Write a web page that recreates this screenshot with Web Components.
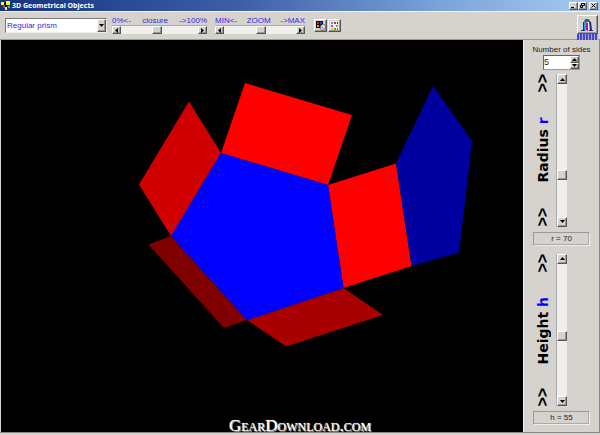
<!DOCTYPE html>
<html lang="en">
<head>
<meta charset="utf-8">
<title>3D Geometrical Objects</title>
<style>
html,body{height:100%;margin:0}
body{font:8px/10px "Liberation Sans",Arial,sans-serif;background:#d6d3ce;color:#222;--face:#d6d3ce;--ink:#2c2ce0;overflow:hidden}
</style>
</head>
<body>
<geo-app></geo-app>
<script>
const bevel = `border:1px solid;border-color:#fff #555 #555 #fff;box-shadow:inset -1px -1px #999;background:var(--face);`;
const define = (name, html, setup) => {
  const t = document.createElement('template');
  t.innerHTML = html;
  customElements.define(name, class extends HTMLElement {
    constructor() {
      super();
      this.attachShadow({mode: 'open'}).append(t.content.cloneNode(true));
    }
    connectedCallback() { if (setup) setup(this, this.shadowRoot); }
  });
};

define('title-bar', `
<style>
:host{display:flex;align-items:center;height:11px;padding:0 2px 0 1px;gap:2px;background:linear-gradient(90deg,#14337f,#3d5fa8 40%,#7fa6dc 75%,#a6caf0);color:#fff}
h1{flex:1;margin:0;font:bold 7px/10px "Noto Sans","Open Sans",sans-serif;white-space:nowrap}
.logo{width:9px;height:9px}
div{display:flex}
button{${bevel}box-sizing:border-box;width:9px;height:8px;padding:0;display:grid;place-items:center}
button:last-child{margin-left:2px}
button svg{width:5px;height:5px;display:block}
</style>
<svg class="logo" viewBox="0 0 9 9" shape-rendering="crispEdges"><path fill="#000" d="M3 2h3v5H3z"/><path fill="#ff0" d="M0 1h3v3H0zM5 0h4v4H5z"/><path fill="#e22" d="M2 4h2v3H2z"/><path fill="#fe3" d="M4 6h2v3H4z"/><path fill="#2bd" d="M7 5h2v2H7z"/></svg>
<h1><slot></slot></h1>
<div>
<button aria-label="Minimize"><svg viewBox="0 0 5 5"><path d="M0 4h3v1H0z"/></svg></button>
<button aria-label="Restore"><svg viewBox="0 0 5 5" fill="none" stroke="#000"><path d="M1.500 2V.5h3v2H3M.5 2.500h2v2h-2z"/></svg></button>
<button aria-label="Close"><svg viewBox="0 0 5 5" stroke="#000"><path d="M.5.5l4 4M4.500.5l-4 4"/></svg></button>
</div>`);

define('scroll-bar', `
<style>
:host{display:flex;height:9px;background:#efefec;box-sizing:border-box;border-top:1px solid #aaa}
button{${bevel}box-sizing:border-box;flex:none;width:9px;height:8px;padding:0;display:grid;place-items:center}
svg{width:5px;height:5px;display:block}
input{appearance:none;flex:1;min-width:0;margin:0;height:8px;background:#efefec}
input::-webkit-slider-runnable-track{height:8px}
input::-webkit-slider-thumb{appearance:none;box-sizing:border-box;width:10px;height:8px;${bevel}}
:host([vertical]){flex-direction:column;width:11px;height:auto;border-top:0;border-left:1px solid #aaa}
:host([vertical]) button{width:10px;height:10px}
:host([vertical]) svg{transform:rotate(90deg)}
:host([vertical]) input{writing-mode:vertical-lr;width:10px;height:auto;min-height:0}
:host([vertical]) input::-webkit-slider-runnable-track{width:10px;height:100%}
:host([vertical]) input::-webkit-slider-thumb{width:10px;height:10px}
</style>
<button aria-label="Decrease"><svg viewBox="0 0 5 5"><path d="M1 2.500L4 0v5z"/></svg></button>
<input type="range" min="0" max="100">
<button aria-label="Increase"><svg viewBox="0 0 5 5"><path d="M4 2.500L1 0v5z"/></svg></button>`,
(host, root) => {
  const input = root.querySelector('input'), [dec, inc] = root.querySelectorAll('button');
  input.value = host.getAttribute('value');
  input.setAttribute('aria-label', host.getAttribute('label'));
  dec.onclick = () => input.stepDown();
  inc.onclick = () => input.stepUp();
});

define('range-group', `
<style>
:host{display:block;color:var(--ink)}
div{display:flex;justify-content:space-between;line-height:9px;white-space:nowrap}
</style>
<div><slot name="min"></slot><slot name="name"></slot><slot name="max"></slot></div>
<slot></slot>`);

define('shape-picker', `
<style>
:host{display:flex;position:relative;width:102px;height:15px}
select{appearance:none;box-sizing:border-box;width:100%;height:100%;margin:0;padding:0 12px 0 1px;border:1px solid;border-color:#777 #eee #eee #777;border-radius:0;background:#fff;color:var(--ink);font:inherit}
span{position:absolute;right:1px;top:1px;bottom:1px;width:9px;box-sizing:border-box;${bevel}display:grid;place-items:center;pointer-events:none}
svg{width:5px;height:3px}
</style>
<select aria-label="Object"><option>Regular prism</option></select>
<span><svg viewBox="0 0 5 3"><path d="M0 0h5L2.500 3z"/></svg></span>`);

define('tool-bar', `
<style>
:host{display:flex;align-items:flex-start;height:29px;box-sizing:border-box;padding:3px 2px 0 5px;border-top:1px solid #f4f4f4;border-bottom:1px solid #999;background:var(--face)}
shape-picker{margin:3px 5px 0 0}
.closure{width:95px;margin-right:8px}
.zoom{width:90px;margin-right:9px}
range-group{padding-top:1px}
.icons{display:flex;gap:1px;padding-top:4px}
button{${bevel}box-sizing:border-box;width:13px;height:13px;padding:0;display:grid;place-items:center}
.icons svg{width:11px;height:11px}
.exit{margin-left:auto;width:21px}
.exit button{width:21px;height:19px}
.exit svg{width:15px;height:14px}
.exit i{display:block;height:6px;background:repeating-linear-gradient(90deg,#4444d0 0 2px,#a9a9e8 2px 3px)}
</style>
<shape-picker></shape-picker>
<range-group class="closure"><span slot="min">0%&lt;-</span><span slot="name">closure</span><span slot="max">-&gt;100%</span><scroll-bar value="47" label="Closure"></scroll-bar></range-group>
<range-group class="zoom"><span slot="min">MIN&lt;-</span><span slot="name">ZOOM</span><span slot="max">-&gt;MAX</span><scroll-bar value="51" label="Zoom"></scroll-bar></range-group>
<div class="icons">
<button aria-label="Copy colours"><svg viewBox="0 0 11 11"><path fill="#111" d="M1 1h7v7H1z"/><path fill="#c22" d="M2 2h2v2H2z"/><path fill="#23f" d="M5 2h2v2H5z"/><path fill="#ea0" d="M2 5h2v2H2z"/><path fill="#ddd" stroke="#444" stroke-width=".7" d="M6 5c3-2 4.500 0 4.500 2S9 10.500 7 10.500L5 8z"/><path fill="none" stroke="#444" stroke-width=".7" d="M6.500 7l2 1.500"/></svg></button>
<button aria-label="Palette"><svg viewBox="0 0 11 11"><path fill="#eee" d="M1 1h9v9H1z"/><path fill="#00c8ee" d="M2 2h2v2H2z"/><path fill="#e22" d="M5 2h2v2H5z"/><path fill="#22e" d="M8 2h1v2H8z"/><path fill="#e2c" d="M2 5h2v2H2z"/><path fill="#e80" d="M7 5h2v2H7z"/><path fill="#ec1" d="M2 8h2v2H2z"/><path fill="#2b3" d="M5 8h2v2H5z"/><path fill="#a3e" d="M8 8h1v2H8z"/></svg></button>
</div>
<div class="exit">
<button aria-label="Exit"><svg viewBox="0 0 15 14"><path fill="#fff" d="M4 4h5v8H4z"/><path fill="#187848" d="M5 1h4l1 3H4z"/><path fill="#00b8c8" d="M4 4h2v8H4z"/><path fill="#d000c0" d="M6 4l2 1v8l-2-1z"/><path fill="#202080" d="M3 4h1v8H3zM9 3l2 1 1 8h-2zM1 12h4v1H1zM9 12h4v1H9z"/></svg></button><i></i>
</div>`);

define('number-spinner', `
<style>
:host{display:block;text-align:center}
label{display:block;white-space:nowrap}
div{display:flex;width:37px;height:15px;box-sizing:border-box;margin:0 auto;border:1px solid;border-color:#666 #999 #999 #666;background:#fff}
input{flex:1;min-width:0;border:0;padding:0 0 2px 0;background:none;font:9px/10px "Liberation Sans",sans-serif;color:#222;outline:0}
p{margin:0;width:9px;display:flex;flex-direction:column}
button{${bevel}box-sizing:border-box;flex:1;min-height:0;padding:0;display:grid;place-items:center}
svg{width:5px;height:3px;display:block}
</style>
<label for="n">Number of sides</label>
<div><input id="n" type="text" value="5"><p><button aria-label="More"><svg viewBox="0 0 5 3"><path d="M0 3h5L2.500 0z"/></svg></button><button aria-label="Fewer"><svg viewBox="0 0 5 3"><path d="M0 0h5L2.500 3z"/></svg></button></p></div>`);

define('dimension-control', `
<style>
:host{display:flex;flex-direction:column;min-height:0}
.row{flex:1;min-height:0;display:flex;justify-content:space-between;padding:0 23px 0 2px}
.label{writing-mode:vertical-rl;transform:rotate(180deg);display:flex;justify-content:space-between;font:bold 14px/16px "DejaVu Sans",Verdana,sans-serif;color:#000;white-space:pre}
.label b{color:#00f}
.arrows{font:bold 16px/16px "Liberation Sans",Arial,sans-serif}
output{display:block;margin-top:5px;border:1px solid;border-color:#999 #eee #eee #999;box-shadow:inset -1px -1px #aaa;height:12px;line-height:12px;text-align:center}
</style>
<div class="row"><div class="label"><span class="arrows">&gt;&gt;</span><span><slot name="name"></slot> <b><slot name="symbol"></slot></b></span><span class="arrows">&gt;&gt;</span></div><slot></slot></div>
<output><slot name="value"></slot></output>`);

define('side-panel', `
<style>
:host{display:flex;flex-direction:column;width:77px;box-sizing:border-box;padding:5px 9px 7px 9px;background:var(--face);border-left:1px solid #eee;border-right:1px solid #888}
number-spinner{margin:0 -1px 4px}
dimension-control{flex:1}
dimension-control+dimension-control{margin-top:8px}
</style>
<number-spinner></number-spinner>
<dimension-control><span slot="name">Radius</span><span slot="symbol">r</span><scroll-bar vertical value="70" label="Radius"></scroll-bar><span slot="value">r = 70</span></dimension-control>
<dimension-control><span slot="name">Height</span><span slot="symbol">h</span><scroll-bar vertical value="55" label="Height"></scroll-bar><span slot="value">h = 55</span></dimension-control>`);

define('solid-view', `
<style>
:host{display:block;background:#000;min-width:0;overflow:hidden}
svg{display:block;width:100%;height:100%}
</style>
<svg viewBox="1 40 522 392" role="img" aria-label="Unfolded pentagonal prism">
<path fill="#d00000" d="M189 101.500L221 153 171 236 139 184.500z"/>
<path fill="#f00" d="M221 153L245 83 352 115 328 185zM328 185L396 163.500 411.500 266 343.500 288z"/>
<path fill="#800000" d="M171 236L148.500 244.500 224 328 247 320z"/>
<path fill="#a80000" d="M247 320L343.500 288 383 315 286 346.500z"/>
<path fill="#0000a0" d="M396 163.500L433 86 472 141 459 252.500 411.500 266z"/>
<path fill="#00f" d="M221 153L328 185 343.500 288 247 320 171 236z"/>
</svg>`);

define('geo-app', `
<style>
:host{display:flex;flex-direction:column;height:100vh;position:relative}
main{flex:1;min-height:0;display:flex;padding-left:1px}
solid-view{flex:1}
footer{height:3px;box-sizing:border-box;border-top:1px solid #888;background:var(--face)}
.mark{position:absolute;left:0;right:0;bottom:0;text-align:center;font:small-caps 17px/18px "Liberation Serif","Times New Roman",serif;color:#fff;text-shadow:0 0 1px #bbb,1px 1px #999;pointer-events:none}
</style>
<title-bar>3D Geometrical Objects</title-bar>
<tool-bar></tool-bar>
<main><solid-view></solid-view><side-panel></side-panel></main>
<footer></footer>
<div class="mark">GearDownload.com</div>`);
</script>
</body>
</html>
